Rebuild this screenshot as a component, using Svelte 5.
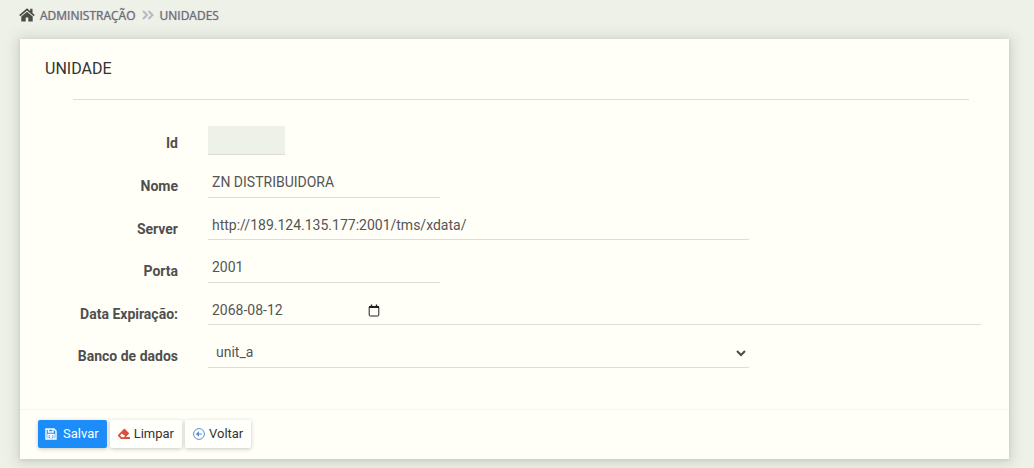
<script lang="ts">
    let id = "";
    let name = "ZN DISTRIBUIDORA";
    let server = "http://189.124.135.177:2001/tms/xdata/";
    let port = "2001";
    let expiration = "2068-08-12";
    let database = "unit_a";

    let expirationInput: HTMLInputElement;

    const clear = () => {
        name = "";
        server = "";
        port = "";
        expiration = "";
    };
</script>

<nav class="breadcrumb">
    <svg class="home" viewBox="0 0 16 14" aria-hidden="true">
        <path d="M8 0.3 0.2 7l1.1 1.3L8 2.6l6.7 5.7L15.8 7l-2.3-2V0.8h-2.3v2.3z" />
        <path d="M8 3.8 2.3 8.6v4.9h4.4V9.6h2.6v3.9h4.4V8.6z" />
    </svg>
    <a href="#administracao">ADMINISTRAÇÃO</a>
    <svg class="separator" viewBox="0 0 12 10" aria-hidden="true">
        <path d="M1 1l4 4-4 4M6.5 1l4 4-4 4" />
    </svg>
    <a href="#unidades">UNIDADES</a>
</nav>

<main class="card">
    <h1>UNIDADE</h1>
    <hr />
    <form id="unit-form" class="fields" on:submit|preventDefault>
        <label for="id">Id</label>
        <input id="id" class="tiny" type="text" bind:value={id} disabled />

        <label for="name">Nome</label>
        <input id="name" class="short" type="text" bind:value={name} />

        <label for="server">Server</label>
        <input id="server" class="medium compact" type="text" bind:value={server} />

        <label for="port">Porta</label>
        <input id="port" class="short" type="text" bind:value={port} />

        <label for="expiration">Data Expiração:</label>
        <div class="date compact">
            <input id="expiration" type="text" bind:value={expiration} bind:this={expirationInput} />
            <button type="button" aria-label="Calendário" on:click={() => expirationInput.focus()}>
                <svg viewBox="0 0 12 13" aria-hidden="true">
                    <rect x="1.2" y="2.6" width="9.6" height="9.4" rx="1" />
                    <path class="bar" d="M1 2h10v2H1zM2.8 0.4H4.2V3H2.8zM7.8 0.4h1.4V3H7.8z" />
                </svg>
            </button>
        </div>

        <label for="database">Banco de dados</label>
        <div class="select medium">
            <select id="database" bind:value={database}>
                <option value="unit_a">unit_a</option>
            </select>
            <svg viewBox="0 0 10 7" aria-hidden="true">
                <path d="M1 1l4 4 4-4" />
            </svg>
        </div>
    </form>

    <footer>
        <button class="btn primary" type="submit" form="unit-form">
            <svg viewBox="0 0 12 12" aria-hidden="true">
                <path class="line" d="M1 1h8l2 2v8H1z" />
                <path class="line" d="M3.5 1v3h4.5V1M3 11V6.5h6V11" />
                <circle class="line" cx="6" cy="8.5" r="1" />
            </svg>
            Salvar
        </button>
        <button class="btn erase" type="button" on:click={clear}>
            <svg viewBox="0 0 12 12" aria-hidden="true">
                <path
                    fill-rule="evenodd"
                    d="M6.4 0.6 11.2 5.3 8 9h4v2H3L0 7.9V7zM3.8 5.6 2 7.6l1.8 1.6h2.2l1.2-1.2z"
                />
            </svg>
            Limpar
        </button>
        <button class="btn back" type="button">
            <svg viewBox="0 0 12 12" aria-hidden="true">
                <circle class="line" cx="6" cy="6" r="5.4" />
                <path class="line" d="M9 6H4" />
                <path d="M2.8 6 6 3.2v5.6z" />
            </svg>
            Voltar
        </button>
    </footer>
</main>

<style>
    :global(body) {
        background-color: #eef1e8;
        font-family: Roboto, "Liberation Sans", sans-serif;
        font-size: 14px;
        color: #333;
    }

    .breadcrumb {
        display: flex;
        align-items: center;
        height: 31px;
        padding: 0 19px;
        font-family: "Open Sans", sans-serif;
        font-size: 12px;
        font-weight: 500;
    }

    .breadcrumb a {
        color: #6f6b78;
        text-decoration: none;
        text-shadow: 0 0 1px #8b8794;
    }

    .home {
        width: 16px;
        height: 14px;
        margin: 0 5px 2px 0;
        fill: #4b4d45;
    }

    .separator {
        width: 12px;
        height: 10px;
        margin: 0 6px 2px;
        fill: none;
        stroke: #b9b6c2;
        stroke-width: 2;
    }

    .card {
        margin: 8px 25px 9px 20px;
        background-color: #fffff8;
        box-shadow:
            0 1px 3px #c9cec4,
            0 1px 12px 3px #cfd4ca;
    }

    h1 {
        margin: 0;
        padding: 18px 25px;
        font-size: 16px;
        font-weight: 400;
        line-height: 24px;
    }

    hr {
        margin: 0 40px 26px 53px;
        border: 0;
        border-top: 1px solid #dcdfd7;
    }

    .fields {
        display: grid;
        grid-template-columns: 130px 1fr;
        gap: 14px 30px;
        padding: 0 28px 41px;
    }

    label {
        padding-top: 6px;
        line-height: 22px;
        text-align: right;
        font-weight: 700;
        color: #4f4f4f;
    }

    input,
    select,
    button {
        box-sizing: border-box;
        margin: 0;
        border: 0;
        border-radius: 0;
        background: none;
        font: inherit;
        color: #555;
    }

    input,
    select {
        width: 100%;
        height: 100%;
        padding: 0 4px 2px;
        outline: none;
    }

    .fields > input,
    .date,
    .select {
        box-sizing: border-box;
        height: 29px;
        border-bottom: 1px solid #dcdfd7;
    }

    .fields > .compact {
        height: 28px;
    }

    .fields > .tiny {
        width: 10%;
        background-color: #eef1e8;
    }

    .fields > .short {
        width: 30%;
    }

    .fields > .medium {
        width: 70%;
    }

    .date {
        display: flex;
        align-items: center;
    }

    .date input {
        width: 160px;
    }

    .date button {
        display: flex;
        padding: 0;
    }

    .date svg {
        width: 12px;
        height: 13px;
        fill: none;
        stroke: #222;
    }

    .date .bar {
        fill: #222;
        stroke: none;
    }

    .select {
        display: grid;
        align-items: center;
    }

    .select select,
    .select svg {
        grid-area: 1 / 1;
    }

    select {
        appearance: none;
        padding: 0 8px 2px;
    }

    .select svg {
        justify-self: end;
        width: 10px;
        height: 7px;
        margin-right: 3px;
        fill: none;
        stroke: #4b4d45;
        stroke-width: 2;
        pointer-events: none;
    }

    footer {
        display: flex;
        gap: 3px;
        padding: 10px 18px 11px;
        border-top: 1px solid #f6f6ef;
    }

    .btn {
        display: flex;
        align-items: center;
        gap: 4px;
        height: 28px;
        padding: 0 8px 1px;
        border-radius: 2px;
        background-color: #fffffb;
        box-shadow: 0 1px 4px #c4c8bf;
        font-size: 13px;
        color: #333;
        cursor: pointer;
    }

    .btn svg {
        width: 12px;
        height: 12px;
        fill: currentColor;
    }

    .btn .line {
        fill: none;
        stroke: currentColor;
    }

    .primary {
        gap: 6px;
        padding: 0 8px 1px 7px;
        background-color: #1b8cf8;
        color: #fff;
    }

    .primary .line {
        stroke-width: 1.4;
    }

    .erase svg {
        color: #dc4f3d;
    }

    .back svg {
        color: #5590cf;
    }
</style>
